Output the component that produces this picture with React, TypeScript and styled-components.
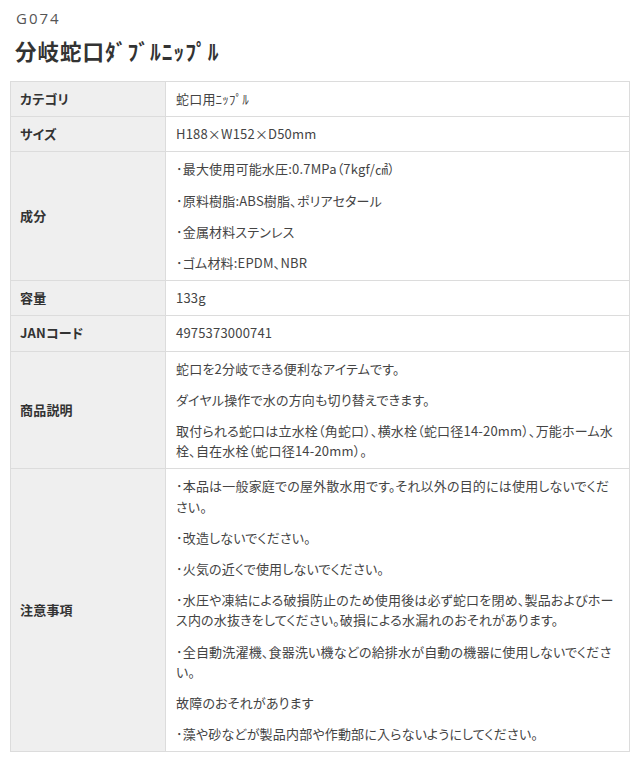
import * as React from 'react';
import styled, { createGlobalStyle } from 'styled-components';

const GlobalStyle = createGlobalStyle`
  html, body {
    margin: 0;
    padding: 0;
    background: #fff;
  }
  body {
    font-family: "Noto Sans CJK JP", "Noto Sans", sans-serif;
    color: #333;
  }
`;

type Row = {
  label: string;
  items: string[];
};

const rows: Row[] = [
  { label: 'カテゴリ', items: ['蛇口用ﾆｯﾌﾟﾙ'] },
  { label: 'サイズ', items: ['H188×W152×D50mm'] },
  {
    label: '成分',
    items: [
      '･最大使用可能水圧:0.7MPa（7kgf/㎠）',
      '･原料樹脂:ABS樹脂、ポリアセタール',
      '･金属材料ステンレス',
      '･ゴム材料:EPDM、NBR',
    ],
  },
  { label: '容量', items: ['133g'] },
  { label: 'JANコード', items: ['4975373000741'] },
  {
    label: '商品説明',
    items: [
      '蛇口を2分岐できる便利なアイテムです。',
      'ダイヤル操作で水の方向も切り替えできます。',
      '取付られる蛇口は立水栓（角蛇口）、横水栓（蛇口径14-20mm）、万能ホーム水栓、自在水栓（蛇口径14-20mm）。',
    ],
  },
  {
    label: '注意事項',
    items: [
      '･本品は一般家庭での屋外散水用です。それ以外の目的には使用しないでください。',
      '･改造しないでください。',
      '･火気の近くで使用しないでください。',
      '･水圧や凍結による破損防止のため使用後は必ず蛇口を閉め、製品およびホース内の水抜きをしてください。破損による水漏れのおそれがあります。',
      '･全自動洗濯機、食器洗い機などの給排水が自動の機器に使用しないでください。',
      '故障のおそれがあります',
      '･藻や砂などが製品内部や作動部に入らないようにしてください。',
    ],
  },
];

function App() {
  return (
    <Page>
      <GlobalStyle />
      <Code>G074</Code>
      <Title>分岐蛇口ﾀﾞﾌﾞﾙﾆｯﾌﾟﾙ</Title>
      <SpecTable>
        <tbody>
          {rows.map((row) => (
            <tr key={row.label}>
              <HeadCell>{row.label}</HeadCell>
              <ValueCell>
                {row.items.map((item, i) => (
                  <Para key={i}>{item}</Para>
                ))}
              </ValueCell>
            </tr>
          ))}
        </tbody>
      </SpecTable>
    </Page>
  );
}

const Page = styled.div`
  width: 641px;
  padding: 0 11px 0 10px;
  box-sizing: border-box;
`;

const Code = styled.div`
  padding: 9px 0 0 6px;
  font-family: "Open Sans", "Noto Sans", sans-serif;
  font-size: 15px;
  line-height: 18px;
  letter-spacing: 2px;
  color: #555;
`;

const Title = styled.h1`
  margin: 0;
  padding: 10px 0 16px 5px;
  font-size: 21.5px;
  line-height: 28px;
  font-weight: 700;
  color: #333;
  letter-spacing: 1px;
`;

const SpecTable = styled.table`
  width: 620px;
  border-collapse: collapse;
  table-layout: fixed;
  font-size: 13px;
  line-height: 20.2px;
  letter-spacing: 0.19px;
  font-feature-settings: "palt";
`;

const HeadCell = styled.th`
  width: 155px;
  box-sizing: border-box;
  padding: 7px 9px;
  background: #efefef;
  border: 1px solid #dcdcdc;
  text-align: left;
  vertical-align: middle;
  font-weight: 700;
  color: #333;
`;

const ValueCell = styled.td`
  padding: 7px 10px;
  border: 1px solid #dcdcdc;
  vertical-align: top;
  color: #444;
`;

const Para = styled.p`
  margin: 0 0 11px;
  &:last-child {
    margin-bottom: 0;
  }
`;

export default App;
